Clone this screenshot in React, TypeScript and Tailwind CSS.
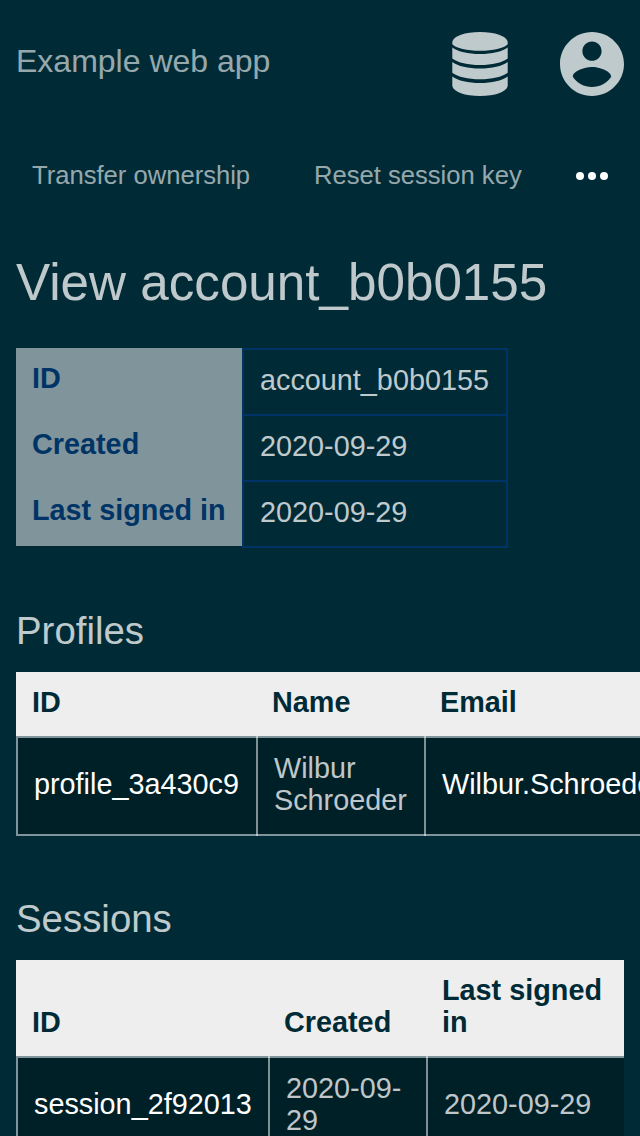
import type { ReactNode } from "react";

const details = [
  ["ID", "account_b0b0155"],
  ["Created", "2020-09-29"],
  ["Last signed in", "2020-09-29"],
];

function DatabaseIcon() {
  return (
    <svg className="h-16 w-14" viewBox="0 0 56 64" fill="currentColor" aria-hidden="true">
      <path d="M.3 9.800C1.500 4 13 0 28 0s26.500 4 27.700 9.800V12.200C52 16.300 41 18.700 28 18.700S4 16.300.3 12.200z" />
      <path d="M.3 15.500C6 19.800 16 22 28 22s22-2.200 27.700-6.500V26.500C50 30.800 40 33 28 33S6 30.800.3 26.500z" />
      <path d="M.3 30C6 34.300 16 36.500 28 36.500s22-2.200 27.700-6.500V40.800C50 45.100 40 47.300 28 47.300S6 45.100.3 40.800z" />
      <path d="M.3 44.400C6 48.700 16 50.900 28 50.900s22-2.200 27.700-6.500V54C54.500 60 43 64 28 64S1.500 60 .3 54z" />
    </svg>
  );
}

function AccountIcon() {
  return (
    <svg className="size-16" viewBox="2 2 20 20" fill="currentColor" aria-hidden="true">
      <path d="M12 2C6.48 2 2 6.48 2 12s4.48 10 10 10 10-4.48 10-10S17.52 2 12 2zm0 3c1.66 0 3 1.34 3 3s-1.34 3-3 3-3-1.34-3-3 1.34-3 3-3zm0 14.2c-2.5 0-4.71-1.28-6-3.22.03-1.99 4-3.08 6-3.08 1.99 0 5.97 1.09 6 3.08-1.29 1.94-3.5 3.22-6 3.22z" />
    </svg>
  );
}

function Cell({ children, link }: { children: ReactNode; link?: boolean }) {
  return (
    <div
      className={`-mr-0.5 flex h-[100px] items-center border-2 border-r-0 border-white/50 bg-black/25 bg-clip-padding px-4 pb-1 ${link ? "text-white" : "text-white/75"}`}
    >
      <div>{children}</div>
    </div>
  );
}

function Heading({ children }: { children: ReactNode }) {
  return <h2 className="h-[50px] pt-px text-[38.4px] leading-[44px]">{children}</h2>;
}

export default function App() {
  return (
    <div className="h-[1136px] w-[640px] overflow-hidden bg-[#002b36] font-['Liberation_Sans',Arial,sans-serif] text-[28.8px] leading-8 text-white/75">
      <header className="flex h-32 items-center justify-between px-4">
        <div className="pb-1.5 text-[32px] leading-9 text-white/60">Example web app</div>
        <div className="flex gap-[52px] text-[#bfcacd]">
          <DatabaseIcon />
          <AccountIcon />
        </div>
      </header>

      <nav className="flex h-24 items-center px-8 text-[25.6px] leading-8 text-white/60">
        <a className="w-[282px] pb-0.5">Transfer ownership</a>
        <a className="pb-0.5">Reset session key</a>
        <svg className="ml-auto h-2 w-8" viewBox="0 0 32 8" fill="white" aria-label="More">
          <circle cx="4" cy="4" r="4" />
          <circle cx="16" cy="4" r="4" />
          <circle cx="28" cy="4" r="4" />
        </svg>
      </nav>

      <main className="pl-4">
        <h1 className="h-[124px] pt-[30px] text-[51.2px] leading-[58px]">View account_b0b0155</h1>

        <div className="flex items-start">
          <div className="w-[226px] bg-[#80959b] font-bold text-[#003366]">
            {details.map(([label]) => (
              <div key={label} className="h-[66px] px-4 pt-3.5">{label}</div>
            ))}
          </div>
          <div className="w-[266px] border-x-2 border-b-2 border-[#003366]">
            {details.map(([label, value]) => (
              <div key={label} className="h-[66px] border-t-2 border-[#003366] px-4 pt-3.5">{value}</div>
            ))}
          </div>
        </div>

        <section className="mt-[60px]">
          <Heading>Profiles</Heading>
          <div className="mt-3.5 grid w-[860px] grid-cols-[240px_168px_452px]">
            <div className="col-span-3 grid h-16 grid-cols-subgrid bg-[#eee] pt-3.5 font-bold text-[#002b36]">
              <div className="px-4">ID</div>
              <div className="px-4">Name</div>
              <div className="px-4">Email</div>
            </div>
            <Cell link>profile_3a430c9</Cell>
            <Cell>Wilbur Schroeder</Cell>
            <Cell link>Wilbur.Schroeder@example.com</Cell>
          </div>
        </section>

        <section className="mt-[60px]">
          <Heading>Sessions</Heading>
          <div className="mt-3.5 grid w-[608px] grid-cols-[252px_158px_198px] overflow-hidden">
            <div className="col-span-3 grid h-24 grid-cols-subgrid items-end bg-[#eee] pb-[18px] font-bold text-[#002b36]">
              <div className="px-4">ID</div>
              <div className="px-4">Created</div>
              <div className="px-4">Last signed in</div>
            </div>
            <Cell link>session_2f92013</Cell>
            <Cell>2020-09-29</Cell>
            <Cell>2020-09-29</Cell>
          </div>
        </section>
      </main>
    </div>
  );
}
